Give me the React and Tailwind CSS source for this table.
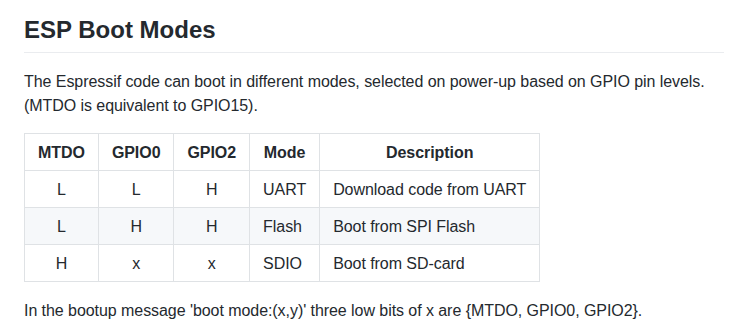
export default function App() {
  const rows = [
    ["L", "L", "H", "UART", "Download code from UART"],
    ["L", "H", "H", "Flash", "Boot from SPI Flash"],
    ["H", "x", "x", "SDIO", "Boot from SD-card"],
  ];
  const th = "border border-[#dfe2e5] px-[13px] pt-[7px] pb-[5px] font-bold text-center";
  const tdc = "border border-[#dfe2e5] px-[13px] pt-[7px] pb-[5px] text-center";
  const tdl = "border border-[#dfe2e5] px-[13px] pt-[7px] pb-[5px] text-left";
  return (
    <div
      className="bg-white text-[#24292e] text-[16px] leading-[24px] pl-6 pt-[15px] w-[745px] h-[336px] overflow-hidden"
      style={{ fontFamily: '"Liberation Sans", Arial, sans-serif' }}
    >
      <div className="w-[700px]">
        <h2 className="text-[24px] leading-[30px] font-bold pb-[7px] border-b border-[#eaecef]">
          ESP Boot Modes
        </h2>
        <div className="tracking-[-0.06px]">
          <p className="mt-[17px]">
            The Espressif code can boot in different modes, selected on power-up based on GPIO pin levels.
            <br />
            (MTDO is equivalent to GPIO15).
          </p>
          <table className="mt-[15px] border-collapse">
            <thead>
              <tr className="bg-white">
                <th className={th}>MTDO</th>
                <th className={th}>GPIO0</th>
                <th className={th}>GPIO2</th>
                <th className={th}>Mode</th>
                <th className={th}>Description</th>
              </tr>
            </thead>
            <tbody>
              {rows.map((r, i) => (
                <tr key={i} className={i === 1 ? "bg-[#f6f8fa]" : "bg-white"}>
                  <td className={tdc}>{r[0]}</td>
                  <td className={tdc}>{r[1]}</td>
                  <td className={tdc}>{r[2]}</td>
                  <td className={tdl}>{r[3]}</td>
                  <td className={tdl}>{r[4]}</td>
                </tr>
              ))}
            </tbody>
          </table>
          <p className="mt-[17px]">
            In the bootup message 'boot mode:(x,y)' three low bits of x are {"{MTDO, GPIO0, GPIO2}"}.
          </p>
        </div>
      </div>
    </div>
  );
}
